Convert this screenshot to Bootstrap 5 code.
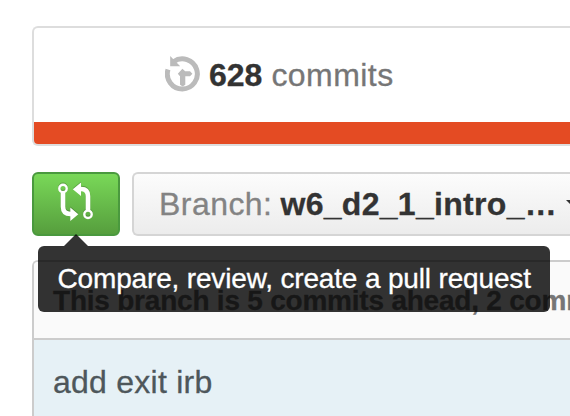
<!DOCTYPE html>
<html lang="en">
<head>
<meta charset="utf-8">
<meta name="viewport" content="width=device-width, initial-scale=1">
<title>Repository</title>
<link href="https://cdn.jsdelivr.net/npm/bootstrap@5.3.0/dist/css/bootstrap.min.css" rel="stylesheet">
<style>
body{font-family:"Liberation Sans",Arial,sans-serif;font-size:32px;line-height:40px;color:#333;background:#fff;width:570px;height:416px;-webkit-text-stroke:.3px}
.repo{padding:26px 0 0 32px;height:416px}
.stats{height:120px;border:2px solid #ddd;border-right:0;border-radius:6px 0 0 6px;overflow:hidden}
.summary{height:94px;padding:0 0 0 131px;color:#767676}
.summary svg{margin-top:-3px}
.summary strong{color:#333;margin-left:9px}
.summary .word{margin-left:9px;letter-spacing:.45px}
.language{height:22px;background:#e44b23}
.tools{margin-top:26px;gap:12px}
.compare{width:88px;height:64px;padding:0;border:2px solid #4a993e;border-radius:6px;background:linear-gradient(#79d858,#569e3d)}
.compare svg{display:block;margin:8px auto 10px 23px;filter:drop-shadow(0 -1px 0 rgba(0,0,0,.22))}
.branch{height:64px;border:2px solid #d5d5d5;border-right:0;border-radius:6px 0 0 6px;background:linear-gradient(#fcfcfc,#ececec);padding:0 0 1px 25px;overflow:hidden}
.branch .label-text{color:#838383;letter-spacing:.45px}
.branch strong{margin-left:8px;letter-spacing:.3px}
.caret{border:8px solid transparent;border-top-color:#333;border-bottom:0;margin-left:9px;flex:none}
.history{margin-top:24px;height:156px;border:2px solid #ccc;border-width:2px 0 0 2px;border-radius:6px 0 0 0;overflow:hidden}
.ahead{height:78px;background:#fafafa;border-bottom:2px solid #ccc;padding:19px 0 0 19px;color:#767676;font-size:28px;letter-spacing:-.22px;font-weight:700}
.latest{height:76px;margin-left:-2px;padding:22px 0 0 19px;border-left:2px solid #b7c7cf;background:#e6f1f6;color:#4e575b;letter-spacing:.25px}
.tip{left:38px;top:246px;width:512px;height:66px;border-radius:6px;background:rgba(0,0,0,.8);color:#fff;padding:13px 0 0 19.5px;font-size:28px;letter-spacing:-.16px}
.tip::before{content:"";position:absolute;left:26px;top:-12px;border:12px solid transparent;border-top:0;border-bottom-color:rgba(0,0,0,.8)}
</style>
<script src="https://cdn.jsdelivr.net/npm/bootstrap@5.3.0/dist/js/bootstrap.bundle.min.js"></script>
</head>
<body class="overflow-hidden position-relative">
<main class="repo overflow-hidden text-nowrap">
  <section class="stats">
    <div class="summary d-flex align-items-center">
      <svg width="35" height="36" viewBox="0 0 35 36" fill="none">
        <path d="M8.500 5.800A15 15 0 1 1 3 13.500" stroke="#bbb" stroke-width="5"/>
        <path d="M5.200 0v10.200h10z" fill="#bbb"/>
        <path d="M17.400 12.700l2.800 2.500h4.800l2.400 2.600-2.400 2.500h-4.700v8.500l-2.600 1.600-2.700-1.600v-8.500l-2.200-2.600z" fill="#bbb"/>
      </svg>
      <strong>628</strong><span class="word">commits</span>
    </div>
    <div class="language"></div>
  </section>
  <div class="tools d-flex">
    <button class="compare btn flex-shrink-0" type="button" aria-label="Compare">
      <svg width="38" height="42" viewBox="0 0 38 42" fill="none">
        <g stroke="#fff"><circle cx="6" cy="6.500" r="3.700" stroke-width="2.400"/><circle cx="31" cy="32.300" r="3.700" stroke-width="2.400"/>
        <path d="M6 10.500v14q0 7.500 7.500 7.500h1M31 28.500V14q0-7-7-7h-1" stroke-width="4.600"/></g>
        <path d="M13.300 25.500v13.500l8-6.700zM24 0.500v13.500l-8.200-6.700z" fill="#fff"/>
      </svg>
    </button>
    <div class="branch d-flex align-items-center flex-grow-1">
      <span class="label-text">Branch:</span><strong>w6_d2_1_intro_…</strong><span class="caret"></span>
    </div>
  </div>
  <section class="history">
    <div class="ahead">This branch is 5 commits ahead, 2 commits behind</div>
    <div class="latest">add exit irb</div>
  </section>
</main>
<div class="tip position-absolute text-nowrap" role="tooltip">Compare, review, create a pull request</div>
</body>
</html>
